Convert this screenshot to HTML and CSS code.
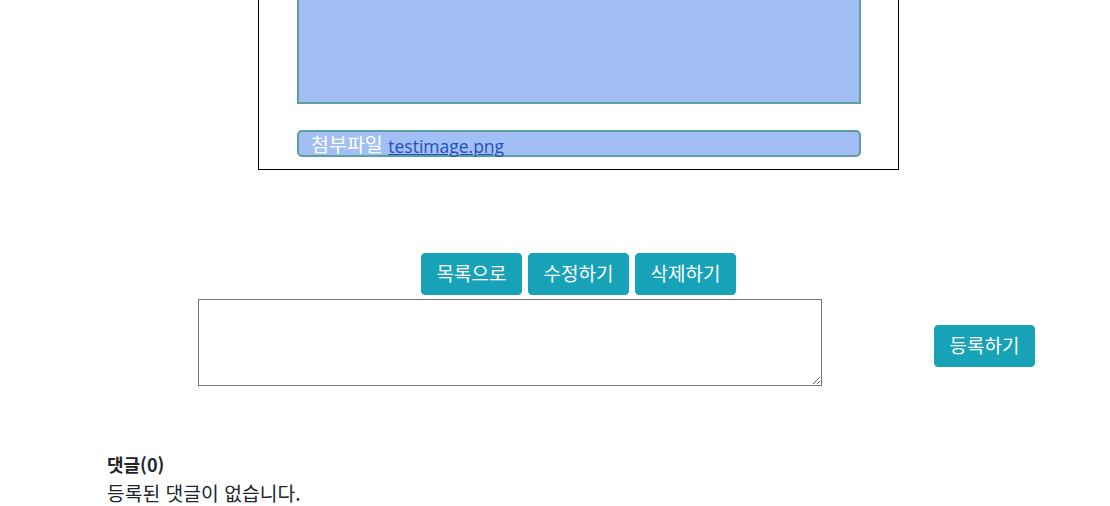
FILE: index.html
```html
<!DOCTYPE html>
<html lang="ko">
<head>
<meta charset="utf-8">
<title>게시글 보기</title>
<link rel="stylesheet" href="styles.css">
</head>
<body>
<div class="post">
  <div class="post-content"></div>
  <div class="attach">첨부파일 <a href="#" class="attach-link">testimage.png</a></div>
</div>
<div class="actions">
  <button class="btn">목록으로</button>
  <button class="btn">수정하기</button>
  <button class="btn">삭제하기</button>
</div>
<div class="reply-form">
  <textarea class="reply-input"></textarea>
  <button class="btn btn-submit">등록하기</button>
</div>
<div class="comments">
  <div class="comments-title">댓글(0)</div>
  <div class="comments-empty">등록된 댓글이 없습니다.</div>
</div>
</body>
</html>
```

FILE: styles.css
```css
html, body {
  margin: 0;
  padding: 0;
  background: #fff;
}
body {
  font-family: "Noto Sans CJK KR", "Noto Sans", sans-serif;
  color: #212529;
  overflow: hidden;
}
.post {
  box-sizing: border-box;
  width: 641px;
  margin: -40px 0 0 258px;
  border: 1px solid #000;
  padding: 0 37px 12px 38px;
}
.post-content {
  box-sizing: border-box;
  height: 143px;
  background: #a1bff4;
  border: 2px solid #5f9ea0;
  border-top: 0;
}
.attach {
  box-sizing: border-box;
  margin-top: 26px;
  height: 27px;
  border: 2px solid #5f9ea0;
  border-radius: 5px;
  background: #a1bff4;
  color: #fff;
  font-size: 19.5px;
  line-height: 24px;
  padding-left: 12px;
  white-space: nowrap;
}
.attach-link {
  color: #1f4fc0;
  font-family: "Open Sans", "Noto Sans CJK KR", sans-serif;
  font-size: 17.5px;
  text-decoration: underline;
  position: relative;
  top: 1px;
}
.actions {
  display: flex;
  gap: 6px;
  margin: 83px 0 0 421px;
}
.btn {
  box-sizing: border-box;
  font-family: "Noto Sans CJK KR", "Noto Sans", sans-serif;
  font-size: 19px;
  line-height: 26px;
  height: 42px;
  padding: 6px 0 8px;
  width: 101px;
  color: #fff;
  background: #17a2b8;
  border: 1px solid #17a2b8;
  border-radius: 4px;
  cursor: pointer;
  white-space: nowrap;
}
.reply-form {
  display: flex;
  align-items: flex-start;
  margin: 4px 0 0 198px;
}
.reply-input {
  box-sizing: border-box;
  width: 624px;
  height: 87px;
  margin: 0;
  border: 1px solid #767676;
  resize: both;
}
.btn-submit {
  margin: 26px 0 0 112px;
}
.comments {
  margin: 64px 0 0 107px;
}
.comments-title {
  font-weight: 700;
  font-size: 18px;
  line-height: 28px;
}
.comments-empty {
  font-size: 19.3px;
  line-height: 28px;
  margin-top: 1px;
}
```
